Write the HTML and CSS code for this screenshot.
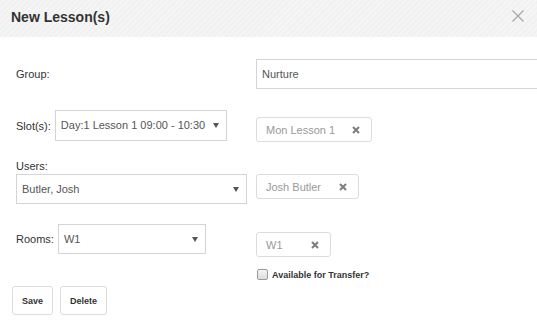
FILE: index.html
```html
<!doctype html>
<html>
<head>
<meta charset="utf-8">
<title>New Lesson(s)</title>
<link rel="stylesheet" href="styles.css">
</head>
<body>
<div class="modal">
    <div class="modal-header">
        <h4 class="modal-title">New Lesson(s)</h4>
        <svg class="close" width="12" height="12" viewBox="0 0 12 12"><path d="M0.5 0.5 L11.5 11.5 M11.5 0.5 L0.5 11.5" stroke="#a8a8a8" stroke-width="1.3" fill="none"/></svg>
    </div>
    <div class="modal-body">
        <div class="row row-group">
            <div class="cell-left"><label>Group:</label></div>
            <div class="cell-right"><div class="field field-group">Nurture</div></div>
        </div>

        <div class="row row-slot">
            <div class="cell-left">
                <label>Slot(s):</label>
                <div class="select select-slot">Day:1 Lesson 1 09:00 - 10:30<span class="caret"></span></div>
            </div>
            <div class="cell-right">
                <div class="tag tag-slot">Mon Lesson 1<svg class="tag-x" width="8" height="8" viewBox="0 0 8 8"><path d="M1 1 L7 7 M7 1 L1 7" stroke="#7d7d7d" stroke-width="2" fill="none"/></svg></div>
            </div>
        </div>

        <div class="users-label"><label>Users:</label></div>
        <div class="row row-users">
            <div class="cell-left">
                <div class="select select-users">Butler, Josh<span class="caret"></span></div>
            </div>
            <div class="cell-right">
                <div class="tag tag-user">Josh Butler<svg class="tag-x" width="8" height="8" viewBox="0 0 8 8"><path d="M1 1 L7 7 M7 1 L1 7" stroke="#7d7d7d" stroke-width="2" fill="none"/></svg></div>
            </div>
        </div>

        <div class="row row-rooms">
            <div class="cell-left">
                <label>Rooms:</label>
                <div class="select select-rooms">W1<span class="caret"></span></div>
            </div>
            <div class="cell-right">
                <div class="tag tag-room">W1<svg class="tag-x" width="8" height="8" viewBox="0 0 8 8"><path d="M1 1 L7 7 M7 1 L1 7" stroke="#7d7d7d" stroke-width="2" fill="none"/></svg></div>
                <div class="check-row">
                    <input type="checkbox" class="check">
                    <span>Available for Transfer?</span>
                </div>
            </div>
        </div>

        <div class="buttons">
            <button class="btn btn-save">Save</button>
            <button class="btn btn-delete">Delete</button>
        </div>
    </div>
</div>
</body>
</html>
```

FILE: styles.css
```css
html, body {
    margin: 0;
    padding: 0;
    background: #fff;
    overflow: hidden;
}
body {
    width: 537px;
    height: 326px;
    font-family: "Liberation Sans", Arial, sans-serif;
    font-size: 11px;
    color: #333;
}
.modal-header {
    height: 37px;
    display: flex;
    align-items: center;
    justify-content: space-between;
    padding: 0 13px 0 11px;
    box-sizing: border-box;
    background: repeating-linear-gradient(135deg, #f1f1f1 0, #f1f1f1 2px, #f5f5f5 2px, #f5f5f5 4px);
}
.modal-title {
    margin: 0;
    font-size: 14px;
    font-weight: bold;
    color: #333;
    position: relative;
    top: -2px;
}
.close {
    display: block;
    position: relative;
    top: -3px;
}
.modal-body {
    padding-left: 16px;
}
.row {
    display: flex;
}
.cell-left {
    width: 240px;
    flex-shrink: 0;
    display: flex;
    align-items: center;
}
.cell-left label {
    margin-right: 4px;
}
.cell-right {
    flex: 1;
    min-width: 0;
}
.row-group {
    margin-top: 22px;
    height: 30px;
}
.field {
    height: 30px;
    box-sizing: border-box;
    border: 1px solid #d4d4d4;
    padding: 0 5px;
    line-height: 28px;
    color: #555;
}
.field-group {
    width: 300px;
}
.select {
    position: relative;
    height: 30px;
    box-sizing: border-box;
    border: 1px solid #d4d4d4;
    padding: 0 5px;
    line-height: 28px;
    color: #555;
    white-space: nowrap;
}
.caret {
    position: absolute;
    right: 7px;
    top: 12px;
    width: 0;
    height: 0;
    border-left: 3px solid transparent;
    border-right: 3px solid transparent;
    border-top: 5px solid #555;
}
.row-slot {
    margin-top: 21px;
    height: 31px;
}
.select-slot {
    width: 172px;
    height: 31px;
    line-height: 29px;
}
.row-slot .cell-right {
    padding-top: 7px;
}
.tag {
    display: flex;
    align-items: center;
    justify-content: space-between;
    box-sizing: border-box;
    height: 25px;
    border: 1px solid #dcdcdc;
    border-radius: 3px;
    padding: 0 11px 0 9px;
    color: #999;
    white-space: nowrap;
}
.tag-x {
    flex-shrink: 0;
    margin-left: 12px;
}
.tag-slot {
    width: 116px;
}
.tag-user {
    width: 103px;
}
.tag-room {
    width: 75px;
}
.users-label {
    margin-top: 18px;
    line-height: 14px;
}
.row-users {
    margin-top: 1px;
    height: 30px;
}
.select-users {
    width: 231px;
}
.row-rooms {
    margin-top: 20px;
}
.row-rooms .cell-left {
    align-items: flex-start;
    height: 30px;
}
.row-rooms .cell-left label {
    line-height: 30px;
}
.select-rooms {
    width: 148px;
}
.row-rooms .cell-right {
    padding-top: 8px;
}
.check-row {
    display: flex;
    align-items: center;
    margin-top: 12px;
    font-size: 9px;
    font-weight: bold;
    color: #333;
}
.check {
    -webkit-appearance: none;
    appearance: none;
    width: 11px;
    height: 11px;
    margin: 0 4px 0 1px;
    border: 1px solid #9a9a9a;
    border-radius: 2px;
    background: linear-gradient(#f4f4f4, #dedede);
}
.buttons {
    display: flex;
    gap: 7px;
    margin-top: 6px;
    margin-left: -4px;
}
.btn {
    height: 29px;
    box-sizing: border-box;
    border: 1px solid #dcdcdc;
    border-radius: 3px;
    background: #fff;
    font-family: "Liberation Sans", Arial, sans-serif;
    font-size: 9px;
    font-weight: bold;
    color: #333;
    padding: 0;
}
.btn-save {
    width: 41px;
}
.btn-delete {
    width: 47px;
}
```
